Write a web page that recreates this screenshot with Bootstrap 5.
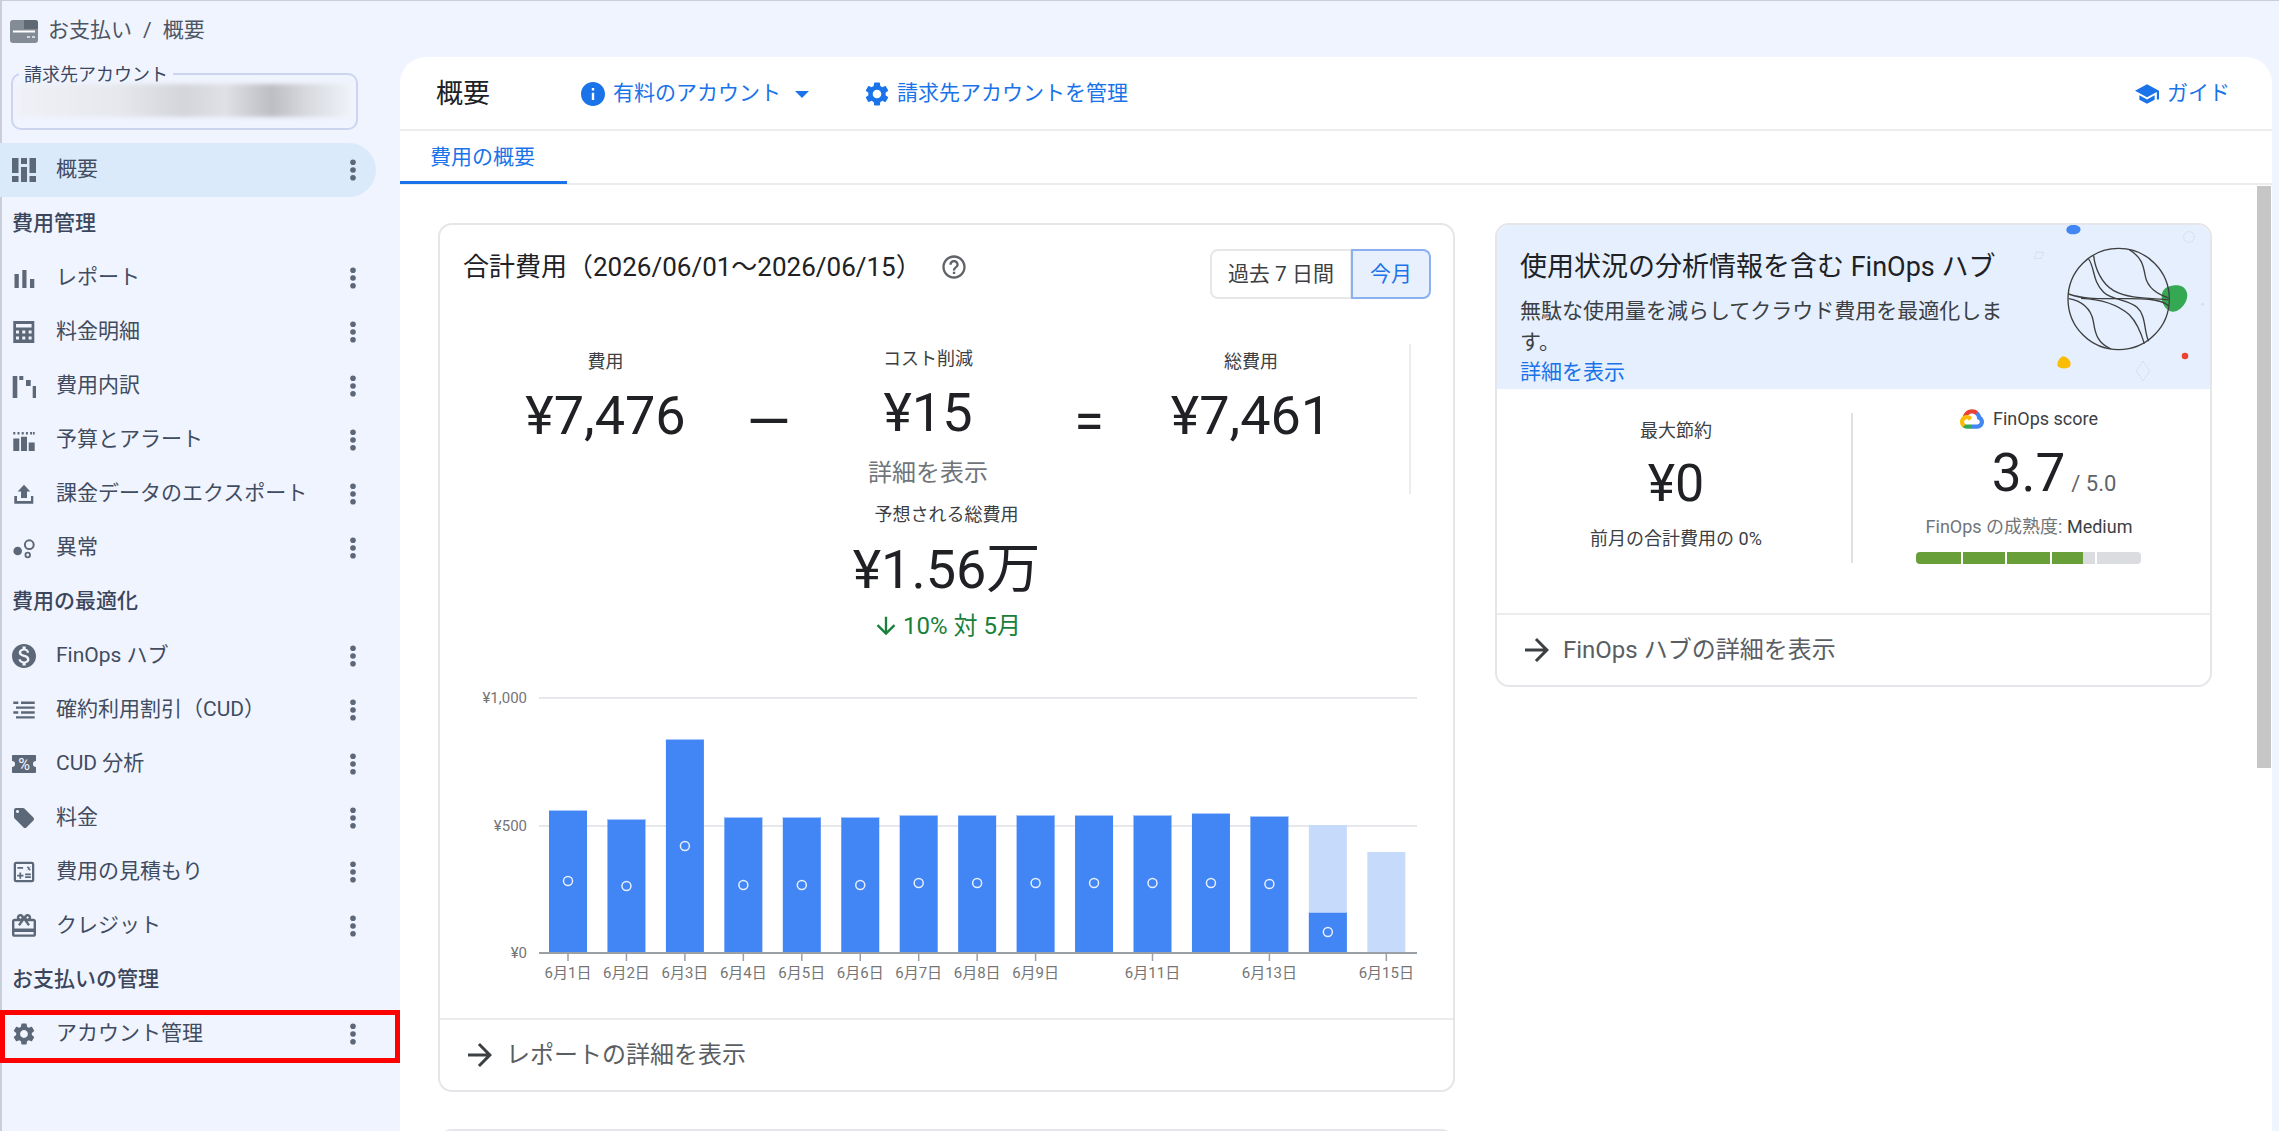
<!DOCTYPE html>
<html lang="ja">
  <head>
    <meta charset="UTF-8" />
    <meta name="viewport" content="width=device-width, initial-scale=1.0" />
    <title>お支払い - 概要</title>
    <link rel="stylesheet" href="https://cdn.jsdelivr.net/npm/bootstrap@5.3.0/dist/css/bootstrap.min.css" />
    <style>
      html, body { height: 100%; }
      body {
        background-color: #f0f4fe;
        font-family: Roboto, "Noto Sans CJK JP", sans-serif;
        color: #202124;
        overflow: hidden;
        box-shadow: inset 2px 1px 0 #c8cfdb;
      }
      .page-wrap { height: 1131px; padding-right: 7px; }

      /* sidebar */
      .side-col { width: 400px; flex: none; color: #414c61; font-size: 21px; }
      .crumb-row { height: 62px; padding-left: 10px; gap: 10px; color: #4b5563; }
      .crumb-row .breadcrumb { margin: 0; --bs-breadcrumb-divider-color: #4b5563; --bs-breadcrumb-item-padding-x: 11px; }
      .crumb-row .breadcrumb-item.active { color: #4b5563; }
      .acct-box { position: relative; width: 347px; height: 57px; margin: 11px 0 13px 11px; border: 2px solid #ccd5f0; border-radius: 10px; padding: 9px 4px 0; }
      .acct-label { position: absolute; top: -11px; left: 6px; padding: 0 5px; font-size: 18px; line-height: 22px; color: #39465e; background-color: #f0f4fe; }
      .acct-blur { height: 33px; background: linear-gradient(90deg, #eff1f6 0%, #e6e8ed 30%, #d3d5da 50%, #dfe1e6 62%, #bcbec4 76%, #d6d8dd 86%, #f0f3f9 100%); filter: blur(2px); }
      .nav-row { height: 54px; width: 376px; padding: 0 11px 0 12px; gap: 20px; }
      .nav-row span { flex: 1; }
      .nav-row svg { flex: none; width: 24px; height: 24px; fill: #5c6778; }
      .nav-on { background-color: #dbeafb; border-radius: 0 27px 27px 0; }
      .nav-head { height: 54px; padding-left: 12px; font-weight: 500; color: #3b465c; }
      .nav-mark { position: relative; }
      .red-mark { position: absolute; top: 3px; left: 0; width: 400px; height: 53px; border: 5.5px solid #f00; }

      /* main panel */
      .main-panel { position: relative; flex: 1; margin-top: 57px; background-color: #fff; border-radius: 26px 26px 0 0; overflow: hidden; }
      .top-bar { height: 74px; padding: 2px 42px 0 36px; border-bottom: 2px solid #ececec; font-size: 21px; }
      .top-title { font-size: 27px; width: 54px; margin-right: 91px; }
      .top-link { color: #1a73e8; text-decoration: none; gap: 8px; }
      .top-link svg { width: 24px; height: 24px; fill: #1a73e8; }
      .caret-down { width: 0; height: 0; margin-left: 14px; margin-right: 56px; border-left: 7px solid transparent; border-right: 7px solid transparent; border-top: 7px solid #1a73e8; }
      .tab-bar { height: 54px; border-bottom: 2px solid #ececec; }
      .tab-bar .nav-link { height: 53px; width: 167px; padding: 0 0 0 30px; line-height: 53px; font-size: 21px; color: #1a73e8; border-bottom: 3px solid #1a73e8; border-radius: 0; }
      .scroll-thumb { position: absolute; top: 129px; right: 1px; width: 14px; height: 582px; background-color: #c6c6c6; }
      .content-area { padding: 38px 0 0 38px; gap: 40px; align-items: flex-start; }
      .left-stack { width: 1017px; flex: none; }

      /* cards */
      .cost-card, .hub-card, .next-card { --bs-card-border-color: #e4e6e9; --bs-card-border-radius: 14px; --bs-card-inner-border-radius: 13px; border-width: 2px; }
      .cost-card .card-footer, .hub-card .card-footer { height: 72px; padding: 0 0 0 22px; background: none; border-top: 2px solid #ececec; font-size: 24px; color: #5a5e63; gap: 8px; }
      .cost-card .card-footer svg, .hub-card .card-footer svg { width: 36px; height: 36px; fill: #3c4043; }
      .title-row { padding: 24px 22px 0 23px; }
      .cost-title { font-size: 26px; line-height: 36px; }
      .cost-title svg { width: 28px; height: 28px; margin-left: 12px; fill: #5f6368; vertical-align: -5px; }
      .range-btns .btn { height: 50px; font-size: 21px; padding: 0; line-height: 46px; border: 2px solid #e6e7e9; color: #3c4043; background: #fff; border-radius: 8px; }
      .range-btns .btn:first-child { width: 142px; }
      .range-btns .btn:last-child { width: 80px; background-color: #e8f0fe; color: #1a73e8; border-color: #8ab0ef; }
      .stat-grid { display: grid; grid-template-columns: 213px 113px 206px 116px 208px; height: 150px; width: 912px; margin: 45px 0 0 59px; border-right: 2px solid #ececec; text-align: center; }
      .stat-label { font-size: 18px; line-height: 24px; color: #3c4043; }
      .stat-num { font-size: 54px; line-height: 60px; margin-top: 12px; }
      .cost-col { padding-top: 6px; }
      .save-col { padding-top: 3px; }
      .op-col { padding-top: 36px; }
      .dash-mark { font-size: 56px; }
      .more-gray { font-size: 24px; line-height: 30px; margin-top: 15px; color: #70757a; }
      .forecast-box { padding-top: 9px; text-align: center; height: 147px; }
      .forecast-num { font-size: 54px; line-height: 64px; margin-top: 11px; }
      .forecast-diff { font-size: 24px; line-height: 30px; margin-top: 9px; color: #188038; }
      .forecast-diff svg { width: 28px; height: 28px; fill: #188038; vertical-align: -6px; margin-right: 3px; }
      .chart-svg { display: block; width: 1014px; height: 338px; margin-top: 39px; }
      .chart-svg text { font-family: Roboto, "Noto Sans CJK JP", sans-serif; font-size: 15px; fill: #757575; }
      .next-card { height: 60px; margin-top: 37px; }

      .hub-card { width: 717px; flex: none; }
      .hub-top { position: relative; height: 164px; padding: 24px 0 0 23px; background-color: #e5effe; border-radius: 13px 13px 0 0; overflow: hidden; }
      .hub-title { font-size: 27px; line-height: 36px; }
      .hub-desc { max-width: 495px; margin-top: 11px; font-size: 21px; line-height: 31px; color: #3c4043; }
      .hub-top a { display: block; font-size: 21px; line-height: 28px; color: #1a73e8; text-decoration: none; }
      .hub-art { position: absolute; top: -2px; right: -2px; width: 211px; height: 165px; }
      .hub-stats { height: 224px; padding-top: 18px; align-items: flex-start; }
      .save-side { width: 356px; height: 150px; margin-top: 6px; padding: 6px 0 0 4px; border-right: 2px solid #dfe1e3; text-align: center; }
      .save-num { font-size: 52px; line-height: 60px; margin-top: 11px; }
      .save-note { font-size: 18px; line-height: 24px; margin-top: 13px; color: #3c4043; }
      .score-side { width: 352px; text-align: center; }
      .score-head { font-size: 18px; line-height: 24px; gap: 9px; color: #3c4043; }
      .score-head svg { width: 24px; height: 20px; }
      .score-num { height: 60px; margin: 12px 0 0 50px; line-height: 60px; font-size: 53px; }
      .score-num small { font-size: 22px; color: #5f6368; margin-left: 6px; }
      .score-level { font-size: 18px; line-height: 24px; margin-top: 12px; color: #70757a; }
      .score-level b { font-weight: 400; color: #3c4043; }
      .score-bar { width: 226px; height: 12px; margin: 13px auto 0; gap: 2px; }
      .score-bar i { display: block; background-color: #689f38; }
      .score-bar i.off { background-color: #dadce0; }
      .score-bar i:first-child { border-radius: 4px 0 0 4px; }
      .score-bar i:last-child { border-radius: 0 4px 4px 0; }
    </style>
  </head>
  <body>
    <svg width="0" height="0" class="position-absolute">
      <symbol id="dots" viewBox="0 0 24 24"><circle cx="12" cy="4.2" r="2.8" /><circle cx="12" cy="12" r="2.8" /><circle cx="12" cy="19.8" r="2.8" /></symbol>
    </svg>

    <div class="page-wrap d-flex">
      <!-- sidebar -->
      <div class="side-col">
        <div class="crumb-row d-flex align-items-center">
          <svg width="28" height="23" viewBox="0 0 28 23">
            <rect width="28" height="23" rx="3" fill="#838c96" />
            <path d="M14 0h11a3 3 0 0 1 3 3v6H14z" fill="#5f6973" />
            <rect x="3" y="10.5" width="22" height="2" fill="#fff" />
            <rect x="17" y="16" width="3" height="2" fill="#d5d8db" /><rect x="22" y="16" width="3" height="2" fill="#d5d8db" />
          </svg>
          <ol class="breadcrumb">
            <li class="breadcrumb-item">お支払い</li>
            <li class="breadcrumb-item active">概要</li>
          </ol>
        </div>

        <div class="acct-box">
          <div class="acct-label">請求先アカウント</div>
          <div class="acct-blur"></div>
        </div>

        <div class="nav-row nav-on d-flex align-items-center">
          <svg viewBox="0 0 24 24"><path d="M0 0h6.5v15H0zM0 18h6.500v6H0zM9 0h6v6H9zM9 9h6v15H9zM17.500 0H24v15h-6.500zM17.500 18H24v6h-6.500z" /></svg>
          <span>概要</span>
          <svg><use href="#dots" /></svg>
        </div>

        <div class="nav-head d-flex align-items-center">費用管理</div>
        <div class="nav-row d-flex align-items-center">
          <svg viewBox="0 0 24 24"><path d="M2.500 8h4.300v14H2.500zM10.300 4h4.200v18h-4.200zM18 13h4.300v9H18z" /></svg>
          <span>レポート</span>
          <svg><use href="#dots" /></svg>
        </div>
        <div class="nav-row d-flex align-items-center">
          <svg viewBox="0 0 24 24"><path fill-rule="evenodd" d="M1.300 1h21v22h-21zM4 4v3.500h15.600V4zM4 10.500v3h3v-3zM10.300 10.500v3h3v-3zM16.600 10.500v3h3v-3zM4 16.500v3h3v-3zM10.300 16.500v3h3v-3zM16.600 16.500v3h3v-3z" /></svg>
          <span>料金明細</span>
          <svg><use href="#dots" /></svg>
        </div>
        <div class="nav-row d-flex align-items-center">
          <svg viewBox="0 0 24 24"><path d="M.7 2h4.600v22H.7zM7.300 2h4v4h-4zM14 6h4.700v6H14zM20.700 12H25v12h-4.300z" /></svg>
          <span>費用内訳</span>
          <svg><use href="#dots" /></svg>
        </div>
        <div class="nav-row d-flex align-items-center">
          <svg viewBox="0 0 24 24"><path d="M1.300 4h2v2.500h-2zM5.500 4h2v2.500h-2zM9.700 4h2v2.500h-2zM13.900 4h2v2.500h-2zM18.100 4h2v2.500h-2zM21 4h1.700v2.500H21zM1.300 10.500h6V23h-6zM9 8.700h6V23H9zM16.700 14.500h6V23h-6z" /></svg>
          <span>予算とアラート</span>
          <svg><use href="#dots" /></svg>
        </div>
        <div class="nav-row d-flex align-items-center">
          <svg viewBox="0 0 24 24"><path d="M12 2.700 18.300 9.500H15V16H9V9.500H5.700zM2.300 14H5v5h14v-5h2.300v7.700H2.300z" /></svg>
          <span>課金データのエクスポート</span>
          <svg><use href="#dots" /></svg>
        </div>
        <div class="nav-row d-flex align-items-center">
          <svg viewBox="0 0 24 24"><circle cx="5.700" cy="15" r="4.300" /><circle cx="17.300" cy="8.700" r="4.400" fill="none" stroke="#5c6778" stroke-width="2" /><circle cx="15.700" cy="19" r="2.300" fill="none" stroke="#5c6778" stroke-width="1.800" /></svg>
          <span>異常</span>
          <svg><use href="#dots" /></svg>
        </div>

        <div class="nav-head d-flex align-items-center">費用の最適化</div>
        <div class="nav-row d-flex align-items-center">
          <svg viewBox="2 2 20 20"><path d="M12 2C6.480 2 2 6.480 2 12s4.480 10 10 10 10-4.480 10-10S17.520 2 12 2zm1.410 16.090V20h-2.670v-1.930c-1.710-.36-3.160-1.460-3.270-3.400h1.960c.1 1.050.82 1.870 2.650 1.870 1.960 0 2.400-.98 2.400-1.590 0-.83-.44-1.610-2.670-2.140-2.480-.6-4.180-1.620-4.180-3.670 0-1.720 1.390-2.840 3.110-3.210V4h2.670v1.950c1.860.45 2.790 1.860 2.850 3.390H14.300c-.05-1.110-.64-1.870-2.220-1.870-1.500 0-2.400.68-2.400 1.640 0 .84.65 1.390 2.670 1.910s4.180 1.390 4.180 3.910c-.01 1.830-1.380 2.830-3.120 3.160z" /></svg>
          <span>FinOps ハブ</span>
          <svg><use href="#dots" /></svg>
        </div>
        <div class="nav-row d-flex align-items-center">
          <svg viewBox="0 0 24 24"><path d="M9 3.500h13.700v2.400H9zM1.300 3.500h5v2.400h-5zM4 8.400h18.700v2.400H4zM9 13.300h13.700v2.400H9zM1.300 13.300h5v2.400h-5zM4 18.200h18.700v2.400H4z" /></svg>
          <span>確約利用割引（CUD）</span>
          <svg><use href="#dots" /></svg>
        </div>
        <div class="nav-row d-flex align-items-center">
          <svg viewBox="0 0 24 24"><path d="M1 3h22a1 1 0 0 1 1 1v5a3 3 0 0 0 0 6v5a1 1 0 0 1-1 1H1a1 1 0 0 1-1-1v-5a3 3 0 0 0 0-6V4a1 1 0 0 1 1-1z" /><text x="12" y="17.500" text-anchor="middle" font-size="16" font-family="Roboto, sans-serif" fill="#f0f4fe">%</text></svg>
          <span>CUD 分析</span>
          <svg><use href="#dots" /></svg>
        </div>
        <div class="nav-row d-flex align-items-center">
          <svg viewBox="0 0 24 24"><path d="M21.410 11.580l-9-9C12.050 2.220 11.550 2 11 2H4c-1.100 0-2 .9-2 2v7c0 .55.22 1.050.59 1.420l9 9c.36.36.86.58 1.410.58.55 0 1.050-.22 1.410-.59l7-7c.37-.36.59-.86.59-1.410 0-.55-.23-1.060-.59-1.420zM5.500 7C4.670 7 4 6.330 4 5.500S4.670 4 5.500 4 7 4.670 7 5.500 6.330 7 5.500 7z" /></svg>
          <span>料金</span>
          <svg><use href="#dots" /></svg>
        </div>
        <div class="nav-row d-flex align-items-center">
          <svg viewBox="1.500 1.500 21 21"><path d="M19 3H5c-1.100 0-2 .9-2 2v14c0 1.100.9 2 2 2h14c1.100 0 2-.9 2-2V5c0-1.100-.9-2-2-2zm0 16H5V5h14v14z" /><path d="M6.250 7.720h5v1.500h-5zM13 15.750h5v1.500h-5zm0-2.500h5v1.500h-5zM8 18h1.500v-2h2v-1.500h-2v-2H8v2H6V16h2zm6.090-7.050l1.410-1.410 1.410 1.410 1.060-1.060-1.410-1.420 1.410-1.410L18.310 7 16.900 8.410 15.490 7l-1.060 1.060 1.410 1.410-1.410 1.420z" /></svg>
          <span>費用の見積もり</span>
          <svg><use href="#dots" /></svg>
        </div>
        <div class="nav-row d-flex align-items-center">
          <svg viewBox="2 2 20 20"><path d="M20 6h-2.180c.11-.31.18-.65.18-1 0-1.660-1.340-3-3-3-1.050 0-1.960.54-2.500 1.350l-.5.67-.5-.68C10.960 2.540 10.050 2 9 2 7.340 2 6 3.340 6 5c0 .35.07.69.18 1H4c-1.110 0-1.990.89-1.990 2L2 19c0 1.110.89 2 2 2h16c1.110 0 2-.89 2-2V8c0-1.110-.89-2-2-2zm-5-2c.55 0 1 .45 1 1s-.45 1-1 1-1-.45-1-1 .45-1 1-1zM9 4c.55 0 1 .45 1 1s-.45 1-1 1-1-.45-1-1 .45-1 1-1zm11 15H4v-2h16v2zm0-5H4V8h5.080L7 10.830 8.620 12 11 8.760l1-1.360 1 1.360L15.380 12 17 10.830 14.920 8H20v6z" /></svg>
          <span>クレジット</span>
          <svg><use href="#dots" /></svg>
        </div>

        <div class="nav-head d-flex align-items-center">お支払いの管理</div>
        <div class="nav-mark">
          <div class="nav-row d-flex align-items-center">
            <svg viewBox="1 1 22 22"><path d="M19.140 12.940c.04-.3.06-.61.06-.94 0-.32-.02-.64-.07-.94l2.030-1.580c.18-.14.23-.41.12-.61l-1.920-3.320c-.12-.22-.37-.29-.59-.22l-2.390.96c-.5-.38-1.030-.7-1.620-.94l-.36-2.540c-.04-.24-.24-.41-.48-.41h-3.840c-.24 0-.43.17-.47.41l-.36 2.540c-.59.24-1.130.57-1.620.94l-2.390-.96c-.22-.08-.47 0-.59.22L2.740 8.870c-.12.21-.08.47.12.61l2.030 1.580c-.05.3-.09.63-.09.94s.02.64.07.94l-2.030 1.580c-.18.14-.23.41-.12.61l1.920 3.320c.12.22.37.29.59.22l2.390-.96c.5.38 1.030.7 1.620.94l.36 2.540c.05.24.24.41.48.41h3.840c.24 0 .44-.17.47-.41l.36-2.540c.59-.24 1.130-.56 1.620-.94l2.390.96c.22.08.47 0 .59-.22l1.920-3.320c.12-.22.07-.47-.12-.61l-2.010-1.580zM12 15.600c-1.980 0-3.600-1.620-3.600-3.600s1.620-3.600 3.600-3.600 3.600 1.620 3.600 3.600-1.620 3.600-3.600 3.600z" /></svg>
            <span>アカウント管理</span>
            <svg><use href="#dots" /></svg>
          </div>
          <div class="red-mark"></div>
        </div>
      </div>

      <!-- main panel -->
      <div class="main-panel">
        <div class="top-bar d-flex align-items-center">
          <div class="top-title">概要</div>
          <a class="top-link d-flex align-items-center" href="#">
            <svg viewBox="2 2 20 20"><path d="M12 2C6.480 2 2 6.480 2 12s4.480 10 10 10 10-4.480 10-10S17.520 2 12 2zm1 15h-2v-6h2v6zm0-8h-2V7h2v2z" /></svg>
            有料のアカウント
          </a>
          <div class="caret-down"></div>
          <a class="top-link d-flex align-items-center" href="#">
            <svg viewBox="2 2 20 20"><path d="M19.140 12.940c.04-.3.06-.61.06-.94 0-.32-.02-.64-.07-.94l2.030-1.580c.18-.14.23-.41.12-.61l-1.920-3.320c-.12-.22-.37-.29-.59-.22l-2.390.96c-.5-.38-1.030-.7-1.620-.94l-.36-2.540c-.04-.24-.24-.41-.48-.41h-3.840c-.24 0-.43.17-.47.41l-.36 2.540c-.59.24-1.130.57-1.620.94l-2.390-.96c-.22-.08-.47 0-.59.22L2.740 8.870c-.12.21-.08.47.12.61l2.030 1.580c-.05.3-.09.63-.09.94s.02.64.07.94l-2.030 1.580c-.18.14-.23.41-.12.61l1.920 3.320c.12.22.37.29.59.22l2.390-.96c.5.38 1.030.7 1.620.94l.36 2.540c.05.24.24.41.48.41h3.840c.24 0 .44-.17.47-.41l.36-2.540c.59-.24 1.130-.56 1.620-.94l2.390.96c.22.08.47 0 .59-.22l1.920-3.320c.12-.22.07-.47-.12-.61l-2.010-1.580zM12 15.600c-1.980 0-3.600-1.620-3.600-3.600s1.620-3.600 3.600-3.600 3.600 1.620 3.600 3.600-1.620 3.600-3.600 3.600z" /></svg>
            請求先アカウントを管理
          </a>
          <a class="top-link d-flex align-items-center ms-auto" href="#">
            <svg viewBox="1 1 22 22"><path d="M5 13.180v4L12 21l7-3.820v-4L12 17l-7-3.820zM12 3L1 9l11 6 9-4.910V17h2V9L12 3z" /></svg>
            ガイド
          </a>
        </div>
        <div class="tab-bar">
          <ul class="nav">
            <li class="nav-item"><a class="nav-link" href="#">費用の概要</a></li>
          </ul>
        </div>
        <div class="scroll-thumb"></div>

        <div class="content-area d-flex">
          <div class="left-stack">
            <div class="card cost-card">
              <div class="title-row d-flex justify-content-between align-items-start">
                <div class="cost-title">
                  合計費用（2026/06/01〜2026/06/15）
                  <svg viewBox="0 0 24 24"><path d="M11 18h2v-2h-2v2zm1-16C6.480 2 2 6.480 2 12s4.480 10 10 10 10-4.480 10-10S17.520 2 12 2zm0 18c-4.410 0-8-3.590-8-8s3.590-8 8-8 8 3.590 8 8-3.590 8-8 8zm0-14c-2.210 0-4 1.790-4 4h2c0-1.100.9-2 2-2s2 .9 2 2c0 2-3 1.750-3 5h2c0-2.250 3-2.500 3-5 0-2.210-1.790-4-4-4z" /></svg>
                </div>
                <div class="btn-group range-btns">
                  <button type="button" class="btn">過去 7 日間</button>
                  <button type="button" class="btn">今月</button>
                </div>
              </div>

              <div class="stat-grid">
                <div class="cost-col">
                  <div class="stat-label">費用</div>
                  <div class="stat-num">¥7,476</div>
                </div>
                <div class="op-col stat-num dash-mark">—</div>
                <div class="save-col">
                  <div class="stat-label">コスト削減</div>
                  <div class="stat-num">¥15</div>
                  <div class="more-gray">詳細を表示</div>
                </div>
                <div class="op-col stat-num">=</div>
                <div class="cost-col">
                  <div class="stat-label">総費用</div>
                  <div class="stat-num">¥7,461</div>
                </div>
              </div>

              <div class="forecast-box">
                <div class="stat-label">予想される総費用</div>
                <div class="forecast-num">¥1.56万</div>
                <div class="forecast-diff">
                  <svg viewBox="0 0 24 24"><path d="M20 12l-1.410-1.410L13 16.170V4h-2v12.170l-5.580-5.590L4 12l8 8 8-8z" /></svg>10% 対 5月
                </div>
              </div>

              <svg id="cost-chart" class="chart-svg" viewBox="440 680 1014 338"></svg>

              <div class="card-footer d-flex align-items-center">
                <svg viewBox="0 0 24 24"><path d="M12 4l-1.410 1.410L16.170 11H4v2h12.170l-5.580 5.590L12 20l8-8z" /></svg>
                レポートの詳細を表示
              </div>
            </div>
            <div class="card next-card"></div>
          </div>

          <div class="card hub-card">
            <div class="hub-top">
              <div class="hub-title">使用状況の分析情報を含む FinOps ハブ</div>
              <div class="hub-desc">無駄な使用量を減らしてクラウド費用を最適化します。</div>
              <a href="#">詳細を表示</a>
              <svg class="hub-art" viewBox="0 70 633 495">
                <path d="M197 86c5-14 36-14 41 0 3 12-8 18-21 18s-24-6-20-18z" fill="#4285f4" />
                <path d="M500 262c24-10 52-8 58 18 6 24-20 58-44 56-22-4-34-30-32-48 1-12 8-22 18-26z" fill="#34a853" />
                <path d="M188 470c12 2 24 16 20 28-4 10-32 12-38 0-4-10 8-28 18-28z" fill="#fbbc04" />
                <circle cx="552" cy="469" r="10" fill="#ea4335" />
                <g fill="none" stroke="#3f3f3f" stroke-width="4">
                  <circle cx="353" cy="298" r="152" />
                  <path d="M385 150c40 25 42 50 48 80 7 35 35 52 70 65" />
                  <path d="M278 168c4 40 25 85 60 105 45 25 110 22 165 27" />
                  <path d="M263 178c20 30 10 65 45 100 25 25 70 18 100 45 28 25 20 70 35 102" />
                  <path d="M203 283c42 15 87 14 137 14 60 0 130-5 163 21" />
                  <path d="M240 296c60 2 110 19 145 49 25 25 37 60 45 87" />
                  <path d="M203 297c37 6 67 28 74 68 6 40 13 65 53 83" />
                </g>
                <g fill="none" stroke="#c8ccd4" stroke-width="2.500" stroke-dasharray="3 3">
                  <circle cx="564" cy="112" r="16" />
                  <path d="M426 484l20 30-20 30-20-30z" />
                  <path d="M106 158h22l-8 18h-20z" />
                </g>
                <circle cx="605" cy="314" r="4" fill="#d8dbe0" />
              </svg>
            </div>
            <div class="hub-stats d-flex">
              <div class="save-side">
                <div class="stat-label">最大節約</div>
                <div class="save-num">¥0</div>
                <div class="save-note">前月の合計費用の 0%</div>
              </div>
              <div class="score-side">
                <div class="score-head d-flex justify-content-center align-items-center">
                  <svg viewBox="0 0 256 206">
                    <path fill="#EA4335" d="M170.252 56.819l22.253-22.253 1.483-9.370C153.437-11.677 88.976-7.496 52.420 33.920 42.267 45.423 34.734 59.764 30.717 74.573l7.970-1.123 44.505-7.340 3.436-3.513c19.797-21.742 53.270-24.667 76.128-6.168l7.496.39z" />
                    <path fill="#4285F4" d="M224.205 73.918c-5.115-18.836-15.616-35.768-30.217-48.722l-31.232 31.232c13.188 10.776 20.701 27.010 20.379 44.037v5.544c15.351 0 27.797 12.445 27.797 27.796 0 15.352-12.446 27.485-27.797 27.485h-55.671l-5.466 5.934v33.340l5.466 5.231h55.671c39.930.311 72.552-31.494 72.863-71.424.188-24.203-11.745-46.893-31.793-60.453" />
                    <path fill="#34A853" d="M71.870 205.796h55.593V161.290H71.870a27.628 27.628 0 0 1-11.399-2.498l-7.887 2.420-22.409 22.253-1.952 7.574c12.567 9.489 27.900 14.825 43.647 14.757" />
                    <path fill="#FBBC05" d="M71.870 61.425C31.940 61.664-.237 94.228.001 134.159c.134 22.298 10.547 43.281 28.222 56.880l32.248-32.248c-13.991-6.321-20.208-22.786-13.887-36.776 6.320-13.990 22.786-20.208 36.775-13.888a27.796 27.796 0 0 1 13.887 13.888l32.248-32.248c-13.721-17.937-35.060-28.424-57.624-28.342" />
                  </svg>
                  FinOps score
                </div>
                <div class="score-num">3.7<small>/ 5.0</small></div>
                <div class="score-level">FinOps の成熟度: <b>Medium</b></div>
                <div class="score-bar d-flex">
                  <i style="width: 45px"></i><i style="width: 42px"></i><i style="width: 43px"></i><i style="width: 31px"></i>
                  <i class="off" style="width: 12px; margin-left: -2px"></i><i class="off" style="width: 44px"></i>
                </div>
              </div>
            </div>
            <div class="card-footer d-flex align-items-center">
              <svg viewBox="0 0 24 24"><path d="M12 4l-1.410 1.410L16.170 11H4v2h12.170l-5.580 5.590L12 20l8-8z" /></svg>
              FinOps ハブの詳細を表示
            </div>
          </div>
        </div>
      </div>
    </div>

    <script src="https://cdn.jsdelivr.net/npm/bootstrap@5.3.0/dist/js/bootstrap.bundle.min.js"></script>
    <script>
      // bar tops and marker heights are in page pixels, same as the svg viewBox
      const days = [
        { top: 810, dot: 881, label: '6月1日' },
        { top: 819, dot: 886, label: '6月2日' },
        { top: 739, dot: 846, label: '6月3日' },
        { top: 817, dot: 885, label: '6月4日' },
        { top: 817, dot: 885, label: '6月5日' },
        { top: 817, dot: 885, label: '6月6日' },
        { top: 815, dot: 883, label: '6月7日' },
        { top: 815, dot: 883, label: '6月8日' },
        { top: 815, dot: 883, label: '6月9日' },
        { top: 815, dot: 883 },
        { top: 815, dot: 883, label: '6月11日' },
        { top: 813, dot: 883 },
        { top: 816, dot: 884, label: '6月13日' },
        { top: 912, dot: 932, ghost: 825 },
        { ghost: 852, label: '6月15日' }
      ];
      const base = 953;
      let out = '';

      [[698, '¥1,000'], [826, '¥500']].forEach(([y, text]) => {
        out += `<rect x="539" y="${y - 1}" width="878" height="2" fill="#e6e8ec" />`;
        out += `<text x="527" y="${y + 5}" text-anchor="end">${text}</text>`;
      });
      out += `<text x="527" y="${base + 5}" text-anchor="end">¥0</text>`;

      days.forEach((d, i) => {
        const x = 549 + 58.45 * i;
        const mid = x + 19;
        if (d.ghost) {
          out += `<rect x="${x}" y="${d.ghost}" width="38" height="${base - d.ghost}" fill="#c6dafc" />`;
        }
        if (d.top) {
          out += `<rect x="${x}" y="${d.top}" width="38" height="${base - d.top}" fill="#4285f4" />`;
          out += `<rect x="${x}" y="${d.top}" width="38" height="1" fill="#a8c7fa" />`;
          out += `<circle cx="${mid}" cy="${d.dot}" r="4.5" fill="#4285f4" stroke="#e8f0fe" stroke-width="1.5" />`;
        }
        if (d.label) {
          out += `<rect x="${mid - 0.75}" y="${base}" width="1.5" height="8" fill="#9aa0a6" />`;
          out += `<text x="${mid}" y="978" text-anchor="middle">${d.label}</text>`;
        }
      });
      out += `<rect x="539" y="${base - 1}" width="878" height="2" fill="#9aa0a6" />`;

      document.getElementById('cost-chart').innerHTML = out;
    </script>
  </body>
</html>
